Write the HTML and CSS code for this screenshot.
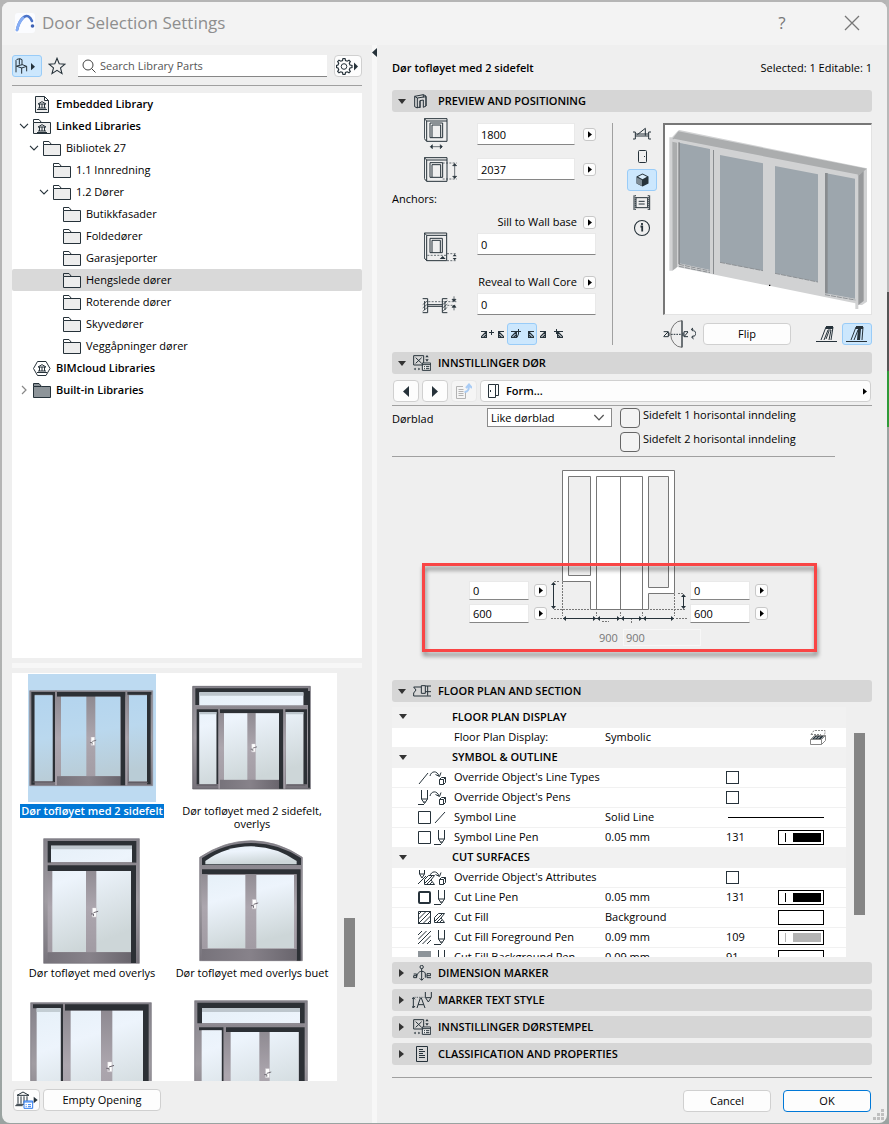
FILE: index.html
```html
<!DOCTYPE html>
<html lang="en">
<head>
<meta charset="utf-8">
<title>Door Selection Settings</title>
<link rel="stylesheet" href="styles.css">
</head>
<body>
<svg class="defs" aria-hidden="true">
  <defs>
    <linearGradient id="glass" x1="0" y1="0" x2="0.3" y2="1"><stop offset="0" stop-color="#e6f0f8"/><stop offset=".35" stop-color="#edf4fc"/><stop offset="1" stop-color="#cdd6d8"/></linearGradient>
    <linearGradient id="glassBlue" x1="0" y1="0" x2="0.2" y2="1"><stop offset="0" stop-color="#b3d4ee"/><stop offset=".5" stop-color="#bad8ee"/><stop offset="1" stop-color="#b9ccd6"/></linearGradient>
    <linearGradient id="metal" x1="0" y1="0" x2="0" y2="1"><stop offset="0" stop-color="#85828a"/><stop offset=".5" stop-color="#a09ca2"/><stop offset="1" stop-color="#77737b"/></linearGradient>
    <linearGradient id="post" x1="0" y1="0" x2="0" y2="1"><stop offset="0" stop-color="#8a868d"/><stop offset=".5" stop-color="#aca6ae"/><stop offset="1" stop-color="#a19ba3"/></linearGradient>
    <linearGradient id="rail" x1="0" y1="0" x2="1" y2="0"><stop offset="0" stop-color="#77737b"/><stop offset=".5" stop-color="#87828a"/><stop offset="1" stop-color="#69656d"/></linearGradient>
    <symbol id="folder" viewBox="0 0 18 15"><path d="M.5 3.500h17v11H.5z" fill="#ededed" stroke="#26323a"/><path d="M.5 3.500V.5H6L8.500 3.500" fill="none" stroke="#26323a"/></symbol>
    <symbol id="down" viewBox="0 0 10 6"><path d="M1 .8 5 5 9 .8" fill="none" stroke="currentColor" stroke-width="1.100"/></symbol>
    <symbol id="tri-r" viewBox="0 0 5 8"><path d="M0 0v8l5-4z"/></symbol>
    <symbol id="tri-d" viewBox="0 0 8 5"><path d="M0 0h8L4 5z"/></symbol>
    <symbol id="handle" viewBox="0 0 24 36"><path d="M5 0h13v30H5z" fill="#fff" stroke="#c9c4ca" stroke-width="2"/><path d="M9 16 25 11M1 20h8v7" stroke="#66616a" stroke-width="3" fill="none"/></symbol>
    <symbol id="pen" viewBox="0 0 12 15"><path d="M4.500 0v9l3 4.500 3-4.500V0M4.500 9h6M0 14.500h7M6.500 12h2" fill="none" stroke="#26323a"/></symbol>
    <symbol id="temple" viewBox="0 0 10 9"><path d="M1 3 5 .6 9 3zM0 8.500h10M1 7h8M2.500 3v4M5 3v4M7.500 3v4" fill="none" stroke="#26323a"/></symbol>
    <symbol id="redirect" viewBox="0 0 17 15"><path d="M1 6C2 1 8 0 10 6M6.500 4.500l4 2 1.500-4" fill="none" stroke="#26323a"/><path d="M10.500 9.500h4v5h-4zM10.500 9.500l2-2h4v5l-2 2M14.500 9.500l2-2" fill="#fff" stroke="#26323a"/></symbol>
    <symbol id="settings" viewBox="0 0 54 48"><path d="M2 2h30v28H2zM8 8l18 17M26 8 8 25" fill="none" stroke="#26323a" stroke-width="3"/><path d="M28 24h25v22H28zM28 29h25M33 35h3M33 41h3M39 35h10M39 41h10" fill="#eee" stroke="#26323a" stroke-width="3"/><path d="m2 42 6-4v8zM16 38l6 4-6 4zM37 7l5-7 5 7zM37 13l5 7 5-7z" fill="#26323a"/></symbol>
    <symbol id="hatch" viewBox="0 0 13 13"><path d="M0 4 4 0M0 8.500 8.500 0M0 13 13 0M4.500 13 13 4.500M9 13l4-4" stroke="#26323a" fill="none"/></symbol>
    <symbol id="wedge" viewBox="0 0 11 10"><path d="M.5 9.500v-5l4-4h6L7 5l3.500 4.500z" fill="#fff" stroke="#26323a"/><path d="m1 8 7-7M3 9l5-5M6 9l2-2" stroke="#26323a"/></symbol>
    <symbol id="wall" viewBox="0 0 6 7"><path d="M0 .5h5.500v6H0M0 6l5-5M2.500 6.500 5.500 3.500" fill="none" stroke="#26323a" stroke-width="1.200"/></symbol>
  </defs>
</svg>

<main class="dialog">
  <header class="titlebar">
    <svg class="logo" width="20" height="20" viewBox="0 0 20 20"><rect width="20" height="20" rx="3" fill="#fbfcff"/><path d="M2 17C5 4 13-2 17 8" fill="none" stroke="#4a73c8" stroke-width="2.600" stroke-linecap="round"/><path d="M2 17C3 12 5 8 8 5" fill="none" stroke="#85adf5" stroke-width="2.600" stroke-linecap="round"/><circle cx="17.500" cy="13" r="1.800" fill="#3f62b4"/></svg>
    <h1>Door Selection Settings</h1>
    <button class="title-btn help" aria-label="Help">?</button>
    <button class="title-btn" aria-label="Close"><svg width="16" height="16" viewBox="0 0 16 16"><path d="m1 1 14 14M15 1 1 15" stroke="#777" stroke-width="1.300"/></svg></button>
  </header>

  <div class="body">
    <section class="library">
      <div class="toolbar">
        <button class="tool active" aria-label="Library parts"><svg width="24" height="17" viewBox="54 174 72 51"><path d="M57 181l3-3 9-2 6 3v16M57 181v36M57 198l17 6 15-5-13-5-16 4M74 203v18M89 199v15M69 177l-2 3v14" fill="none" stroke="#26323a" stroke-width="3"/><path d="M102 189v22l12-11z" fill="#26323a"/></svg></button>
        <button class="bare" aria-label="Favorites"><svg width="18" height="18" viewBox="0 0 18 18"><path d="M9 1.300l2.200 5.500 5.800.4-4.500 3.700 1.500 5.700L9 13.400l-5 3.200 1.500-5.700L1 7.200l5.800-.4z" fill="none" stroke="#26323a" stroke-width="1.100"/></svg></button>
        <label class="search"><svg width="14" height="14" viewBox="0 0 14 14"><circle cx="6" cy="6" r="5" fill="none" stroke="#444"/><path d="m9.500 9.500 4 4" stroke="#444"/></svg><input type="text" placeholder="Search Library Parts" aria-label="Search Library Parts"></label>
        <button class="btn gear" aria-label="Library settings"><svg width="24" height="18" viewBox="0 0 24 18"><path d="M7 1.500h2l.5 2 1.700.7 1.800-1 1.300 1.300-1 1.800.7 1.700 2 .5v2l-2 .5-.7 1.700 1 1.800-1.300 1.300-1.800-1-1.700.7-.5 2H7l-.5-2-1.700-.7-1.800 1-1.300-1.300 1-1.800-.7-1.700-1.500-.5v-2L2 8l.7-1.700-1-1.800L3 3.200l1.800 1 1.700-.7z" fill="none" stroke="#26323a" stroke-width="1.200"/><circle cx="8" cy="9.500" r="2.800" fill="none" stroke="#26323a"/><path d="M18 5.500v8l4-4z" fill="#26323a"/></svg></button>
      </div>
      <ul class="tree">
        <li class="l0 strong"><span class="chev"></span><svg class="ico tall" viewBox="0 0 18 17"><path d="M2.500 .5h9l4 4v12h-13zM11.500 .5v4h4" fill="#eee" stroke="#26323a"/><use href="#temple" x="4" y="5" width="10" height="9"/></svg>Embedded Library</li>
        <li class="l0 strong"><svg class="chev"><use href="#down"/></svg><svg class="ico" viewBox="0 0 18 15"><use href="#folder" width="18" height="15"/><use href="#temple" x="4" y="5" width="10" height="9"/></svg>Linked Libraries</li>
        <li class="l1"><svg class="chev"><use href="#down"/></svg><svg class="ico"><use href="#folder"/></svg>Bibliotek 27</li>
        <li class="l2"><span class="chev"></span><svg class="ico"><use href="#folder"/></svg>1.1 Innredning</li>
        <li class="l2"><svg class="chev"><use href="#down"/></svg><svg class="ico"><use href="#folder"/></svg>1.2 Dører</li>
        <li class="l3"><span class="chev"></span><svg class="ico"><use href="#folder"/></svg>Butikkfasader</li>
        <li class="l3"><span class="chev"></span><svg class="ico"><use href="#folder"/></svg>Foldedører</li>
        <li class="l3"><span class="chev"></span><svg class="ico"><use href="#folder"/></svg>Garasjeporter</li>
        <li class="l3 selected"><span class="chev"></span><svg class="ico"><use href="#folder"/></svg>Hengslede dører</li>
        <li class="l3"><span class="chev"></span><svg class="ico"><use href="#folder"/></svg>Roterende dører</li>
        <li class="l3"><span class="chev"></span><svg class="ico"><use href="#folder"/></svg>Skyvedører</li>
        <li class="l3"><span class="chev"></span><svg class="ico"><use href="#folder"/></svg>Veggåpninger dører</li>
        <li class="l0 strong"><span class="chev"></span><svg class="ico" viewBox="0 0 18 15"><path d="M4.500.5h8.500l4 7-4 7H4.500l-4-7z" fill="none" stroke="#26323a"/><use href="#temple" x="4" y="3" width="10" height="9"/></svg>BIMcloud Libraries</li>
        <li class="l0 strong"><svg class="chev closed" viewBox="0 0 10 10"><path d="m3 1 4 4-4 4" fill="none" stroke="#888" stroke-width="1.200"/></svg><svg class="ico" viewBox="0 0 18 15"><path d="M.5 3.500V.5H6L8.500 3.500h9v11H.5z" fill="#8d9499" stroke="#26323a"/><path d="M.5 3.500h8" stroke="#26323a"/></svg>Built-in Libraries</li>
      </ul>
      <div class="row-split"></div>
      <div class="gallery-wrap">
        <div class="gallery">
          <figure class="picked">
            <svg viewBox="84 99 384 384"><path d="M84 99h384v384H84z" fill="#bddaf1"/><path d="M89 149h369v285H89z" fill="url(#metal)" stroke="#8a8790" stroke-width="2"/><path d="M94 153h360v8H104v270H94zM171 153h206v14H171zM157 161h8v262h-8zM361 161h15v272h-15zM441 161h11v269h-11z" fill="#2c3035"/><path d="M165 149h6v284h-6zM376 149h6v284h-6zM171 167h190v240H171z" fill="url(#post)"/><path d="M171 406h190v27H171z" fill="url(#rail)"/><path d="M104 163h54v258h-54zM183 167h76v238h-76zM286 167h75v238h-75zM387 163h54v258h-54z" fill="url(#glassBlue)"/><path d="M98 423h63M384 425h60" stroke="#5c5961" stroke-width="3"/><use href="#handle" x="269" y="288" width="20" height="30"/></svg>
            <figcaption><span>Dør tofløyet med 2 sidefelt</span></figcaption>
          </figure>
          <figure>
            <svg viewBox="564 99 384 384"><path d="M578 136h353v308H578z" fill="url(#metal)" stroke="#5c5a62" stroke-width="2"/><path d="M586 142h338v50h-14v-37H598v37h-12zM590 205h65v8h-57v217h-8zM649 213h7v216h-7zM660 205h190v238h-13V217H660zM855 205h66v225h-11V213h-55zM924 150h6v290h-6z" fill="#2c3035"/><path d="M586 197h334v7H586zM655 203h5v240h-5zM850 203h6v240h-6zM660 217h177v200H660z" fill="url(#post)"/><path d="M660 416h177v27H660z" fill="url(#rail)"/><path d="M598 154h312v39H598zM598 213h51v217h-51zM672 217h70v199h-70zM767 217h70v199h-70zM858 213h52v217h-52z" fill="url(#glass)"/><path d="M598 154h312v10H598zM598 213h51v7h-51zM858 213h52v7h-52z" fill="#bcc5cc"/><path d="M590 432h62M860 432h56" stroke="#5c5961" stroke-width="3"/><use href="#handle" x="751" y="308" width="20" height="30"/></svg>
            <figcaption><span>Dør tofløyet med 2 sidefelt, overlys</span></figcaption>
          </figure>
          <figure>
            <svg viewBox="84 45 384 384"><path d="M131 53h287v374H131z" fill="url(#metal)" stroke="#77747c" stroke-width="2"/><path d="M143 60h266v65h-13V74H153v51h-10zM143 133h250v17H143zM393 133h15v293h-15z" fill="#2c3035"/><path d="M141 125h266v7H141zM143 150h250v245H143z" fill="url(#post)"/><path d="M143 394h250v31H143z" fill="url(#rail)"/><path d="M153 74h243v49H153zM157 150h101v243H157zM289 150h104v243H289z" fill="url(#glass)"/><path d="M153 74h243v11H153z" fill="#bdc6cd"/><use href="#handle" x="272" y="260" width="23" height="34"/></svg>
            <figcaption><span>Dør tofløyet med overlys</span></figcaption>
          </figure>
          <figure>
            <svg viewBox="564 45 384 384"><path d="M599 419V109Q672 60 753 59q82 1 154 50v310z" fill="url(#metal)" stroke="#77747c" stroke-width="2"/><path d="M606 135v-24q68-45 147-45 80 0 150 45v24zM606 145h296v274h-12V160H606z" fill="#2c3035"/><path d="M616 130v-10q62-44 137-44t137 44v10z" fill="url(#glass)"/><path d="M604 132h300v12H604zM606 160h284v225H606z" fill="url(#post)"/><path d="M606 384h284v34H606z" fill="url(#rail)"/><path d="M623 162h113v220H623zM769 162h113v220H769z" fill="url(#glass)"/><use href="#handle" x="752" y="235" width="23" height="34"/></svg>
            <figcaption><span>Dør tofløyet med overlys buet</span></figcaption>
          </figure>
          <figure>
            <svg viewBox="84 531 384 384"><path d="M92 545h362v370H92z" fill="url(#metal)" stroke="#77747c" stroke-width="2"/><path d="M99 550h90v365h-7V562H99zM195 550h251v365h-17V569H195z" fill="#2c3035"/><path d="M189 547h6v368h-6zM195 569h234v346H195z" fill="url(#post)"/><path d="M110 562h72v353h-72zM212 569h91v346h-91zM337 569h92v346h-92z" fill="url(#glass)"/><path d="M110 562h72v11h-72z" fill="#c3cdd3"/><use href="#handle" x="318" y="722" width="24" height="36"/></svg>
          </figure>
          <figure>
            <svg viewBox="564 531 384 384"><path d="M584 539h338v376H584z" fill="url(#metal)" stroke="#77747c" stroke-width="2"/><path d="M592 545h322v62h-14v-46H606v46h-14zM597 619h74v296h-6V628h-68zM678 619h236v296h-18V633H678z" fill="#2c3035"/><path d="M594 611h318v7H594zM671 618h7v297h-7zM678 633h218v282H678z" fill="url(#post)"/><path d="M606 561h294v45H606zM605 628h60v287h-60zM692 633h86v282h-86zM809 633h87v282h-87z" fill="url(#glass)"/><path d="M606 561h294v12H606z" fill="#bdc6cd"/><use href="#handle" x="792" y="742" width="22" height="34"/></svg>
          </figure>
        </div>
        <div class="thumb gallery-thumb"></div>
      </div>
      <footer class="library-foot">
        <button class="btn lib-btn" aria-label="Library manager"><svg width="24" height="18" viewBox="44 808 72 54"><path d="m50 821 18-10 18 10zM53 824v22M62 824v22M71 824v22M80 824v22M48 848h24M45 852h22" fill="none" stroke="#26323a" stroke-width="3"/><path d="M71 838h26v22H71z" fill="#fff" stroke="#2f7cf0" stroke-width="3"/><path d="M71 841h26M76 849h3M83 849h9M76 855h3M83 855h9" stroke="#2f7cf0" stroke-width="3"/><path d="M100 825v20l12-10z" fill="#26323a"/></svg></button>
        <button class="btn empty-btn">Empty Opening</button>
      </footer>
    </section>

    <div class="splitter"><svg width="5" height="9" viewBox="0 0 5 9"><path d="M5 0v9L0 4.500z" fill="#26323a"/></svg></div>

    <section class="settings">
      <div class="summary"><strong>Dør tofløyet med 2 sidefelt</strong><span>Selected: 1 Editable: 1</span></div>

      <button class="bar"><svg class="tri"><use href="#tri-d"/></svg><svg class="bar-ico" viewBox="102 129 54 48"><path d="m107 139 8 5v30l-8-4zM115 144l26-4v28l-8 4v-22l-10 2v20h-8M107 139l26-5 8 4M123 152v22M133 134v8M141 138v30" fill="none" stroke="#26323a" stroke-width="3"/></svg><span>PREVIEW AND POSITIONING</span></button>

      <div class="preview">
        <div class="position">
          <div class="field">
            <svg class="dim" width="34" height="32" viewBox="132 203 102 96"><path d="M133 205h68v68h-61l-7-8zM140 212h61M140 212v61M133 205l7 7M150 218h38v44h-38zM156 224h26v38M156 224v38" fill="none" stroke="#26323a" stroke-width="3"/><path d="M152 289h34M157 283l-6 6 6 6zM181 283l6 6-6 6z" fill="#26323a" stroke="#26323a" stroke-width="2"/></svg>
            <input type="text" value="1800" aria-label="Width"><button class="more" aria-label="Width options"><svg><use href="#tri-r"/></svg></button>
          </div>
          <div class="field">
            <svg class="dim" width="34" height="32" viewBox="132 307 102 96"><path d="M133 321h68v71h-61l-7-8zM140 328h61M140 328v64M133 321l7 7M150 336h38v44h-38zM156 342h26v38M156 342v38" fill="none" stroke="#26323a" stroke-width="3"/><path d="M188 337h42M188 385h42" stroke="#26323a" stroke-width="2" stroke-dasharray="6 4"/><path d="M224 338v46M218 345l6-6 6 6zM218 377l6 6 6-6z" fill="#26323a" stroke="#26323a" stroke-width="2"/></svg>
            <input type="text" value="2037" aria-label="Height"><button class="more" aria-label="Height options"><svg><use href="#tri-r"/></svg></button>
          </div>
          <div class="anchors">Anchors:</div>
          <div class="anchor">
            <svg class="dim" width="36" height="30" viewBox="132 546 108 90"><path d="M133 549h67v83h-60l-7-8zM140 556h60M140 556v76M133 549l7 7M150 565h37v43h-37zM156 571h25v37M156 571v37" fill="none" stroke="#26323a" stroke-width="3"/><path d="M142 616h56M201 611h30M201 632h30" stroke="#26323a" stroke-width="2" stroke-dasharray="6 4"/><path d="m179 627 9-9 9 9zM224 612v18M218 619l6-7 6 7zM218 624l6 7 6-7z" fill="#26323a"/></svg>
            <div class="anchor-body"><div class="anchor-label"><label for="sill">Sill to Wall base</label><button class="more" aria-label="Sill options"><svg><use href="#tri-r"/></svg></button></div><input id="sill" type="text" value="0"></div>
          </div>
          <div class="anchor">
            <svg class="dim reveal-ico" width="36" height="24" viewBox="128 734 108 72"><path d="M130 745h15v42h-15M204 745h-15v42h15M145 763h44M145 768h44M136 752v27M197 752v27" fill="none" stroke="#26323a" stroke-width="3"/><path d="m130 763 15-12M130 773l15-12M130 783l15-12M190 763l14-12M190 773l14-12M190 783l14-12" stroke="#26323a" stroke-width="2"/><path d="M147 754h84M204 765h24" stroke="#26323a" stroke-width="2" stroke-dasharray="6 4"/><path d="M224 738v15M224 766v14M218 747l6 7 6-7zM218 771l6-7 6 7z" fill="#26323a" stroke="#26323a" stroke-width="2"/></svg>
            <div class="anchor-body"><div class="anchor-label"><label for="reveal">Reveal to Wall Core</label><button class="more" aria-label="Reveal options"><svg><use href="#tri-r"/></svg></button></div><input id="reveal" type="text" value="0"></div>
          </div>
          <div class="seg">
            <button class="bare" aria-label="Anchor outside"><svg width="24" height="12" viewBox="0 0 24 12"><use href="#wall" x="1" y="3" width="6" height="7"/><path d="M9 4.500h5M11.500 2v5" stroke="#26323a"/><g transform="matrix(-1 0 0 1 24 0)"><use href="#wall" x="0" y="3" width="6" height="7"/></g></svg></button>
            <button class="tool active" aria-label="Anchor middle"><svg width="24" height="12" viewBox="0 0 24 12"><use href="#wall" x="1" y="3" width="6" height="7"/><path d="M6 3.500h5M8.500 1v5M7 9.500 8.500 6" stroke="#26323a"/><g transform="matrix(-1 0 0 1 24 0)"><use href="#wall" x="0" y="3" width="6" height="7"/></g></svg></button>
            <button class="bare" aria-label="Anchor inside"><svg width="24" height="12" viewBox="0 0 24 12"><use href="#wall" x="0" y="3" width="6" height="7"/><path d="M14 3.500h5M16.500 1v5" stroke="#26323a"/><g transform="matrix(-1 0 0 1 23 0)"><use href="#wall" x="0" y="3" width="6" height="7"/></g></svg></button>
          </div>
        </div>

        <div class="views">
          <button class="bare" aria-label="Plan view"><svg width="18" height="14" viewBox="69 109 54 42"><path d="M69 124h7v21h-7M123 124h-7v21h7M76 130h40M76 136h40M82 132l24-19v22" fill="none" stroke="#26323a" stroke-width="3"/></svg></button>
          <button class="bare" aria-label="Elevation view"><svg width="11" height="14" viewBox="0 0 11 14"><rect x="1.500" y=".5" width="8" height="12" rx="1" fill="none" stroke="#26323a"/><path d="M7.500 6v1" stroke="#26323a"/></svg></button>
          <button class="tool active" aria-label="3D view"><svg width="13" height="14" viewBox="0 0 13 14"><path d="m6.500.5 6 3v7l-6 3-6-3v-7z" fill="#26323a"/><path d="m6.500 1.500 4.500 2.300-4.500 2.400L2 3.800z" fill="#d9edfc"/><path d="M1 4.500 6 7v6l-5-2.500z" fill="#7d8b95"/></svg></button>
          <button class="bare" aria-label="Animation"><svg width="18" height="16" viewBox="70 314 54 48"><path d="M73 315v44M120 315v44M79 322h35v30H79z" fill="none" stroke="#26323a" stroke-width="3"/><path d="M77 315v44M116 315v44" stroke="#26323a" stroke-width="4" stroke-dasharray="3 3"/><path d="M87 333h18M87 341h18" stroke="#26323a" stroke-width="3"/></svg></button>
          <button class="bare info" aria-label="Information"><svg width="18" height="18" viewBox="0 0 18 18"><circle cx="9" cy="9" r="7.500" fill="none" stroke="#26323a" stroke-width="1.100"/><path d="M9 4v2M7.500 7.500h1.700v5" fill="none" stroke="#26323a" stroke-width="1.800"/></svg></button>
        </div>

        <div class="model">
          <div class="canvas">
            <svg viewBox="162 102 618 567"><path d="M175 139l8 0 18-20 4-2 563 115v400l-15 10h-11v12h-9v-17L195 527v4l-10 8h-10z" fill="#d1d2d3"/><path d="M184 144 202 121l565 112-25 21zM184 152l14 3v374l-13 9z" fill="#abadae"/><path d="M742 254l16-14v390l-16 12z" fill="#97999b"/><path d="M204 155l93 19v363l-93-20zM327 192l129 25v322l-129-25zM492 225l129 25v323l-129-26zM642 246l90 17v360l-90-16z" fill="#9da6ad"/><path d="M202 153h5v366h-5zM306 177h3v372h-3zM642 246h8v361h-8z" fill="#898c8f"/><path d="M204 520l93 20M204 526l93 19M327 514l129 25M492 547l129 26M642 611l91 16" stroke="#8d9195" stroke-width="3" stroke-dasharray="15 3"/><path d="m188 147 552 107" stroke="#d1d2d3" stroke-width="7"/><path d="M474 581h4v4h-4z"/></svg>
          </div>
          <div class="model-tools">
            <svg width="33" height="28" viewBox="158 688 99 84"><path d="M215 690a34 40 0 0 0 0 80z" fill="#eee" stroke="#777" stroke-width="3"/><path d="M215 690v80" stroke="#26323a" stroke-width="3"/><path d="M182 731h31" stroke="#26323a" stroke-width="3" stroke-dasharray="5 3"/><path d="M160 723h14v15h-14M176 726v10M233 723h-12v15h12M218 726v10M160 737l13-13M222 737l11-13M244 716c16 5 16 20 1 24M248 712l-5 4 5 6M249 734l-5 6 6 5" fill="none" stroke="#26323a" stroke-width="3"/></svg>
            <button class="btn flip">Flip</button>
            <button class="bare open" aria-label="Opening straight"><svg width="22" height="18" viewBox="0 0 22 18"><path d="M0 16.500h21M5 15l5-13h7l-2 13M8 15l4-10 3 0-2 10M10 14l3-8" fill="none" stroke="#26323a"/><path d="M10 1h7v3h-7z" fill="#26323a"/></svg></button>
            <button class="tool active" aria-label="Opening slanted"><svg width="22" height="18" viewBox="0 0 22 18"><path d="M0 16.500h21M5 15l5-13h7l-1 13M8 15l4-10" fill="none" stroke="#26323a"/><path d="M10 1h7v3h-7zM12 4h3l-1 11h-3z" fill="#26323a"/></svg></button>
          </div>
        </div>
      </div>

      <button class="bar"><svg class="tri"><use href="#tri-d"/></svg><svg class="bar-ico"><use href="#settings"/></svg><span>INNSTILLINGER DØR</span></button>
      <div class="pager">
        <button class="btn step" aria-label="Previous page"><svg width="6" height="11" viewBox="0 0 6 11"><path d="M6 0v11L0 5.500z" fill="#26323a"/></svg></button>
        <button class="btn step" aria-label="Next page"><svg width="6" height="11" viewBox="0 0 6 11"><path d="M0 0v11l6-5.500z" fill="#26323a"/></svg></button>
        <button class="btn step faded" aria-label="Parent page" disabled><svg width="16" height="16" viewBox="0 0 16 16"><path d="M7 3.500H.5v12h9V9M2.500 6.500h5M2.500 8.500h5M2.500 10.500h5M2.500 12.500h5" fill="none" stroke="#b3b3b3"/><path d="M8.500 9C12 9 13 7 13 2M10 5l3-3.500L16 5" fill="none" stroke="#a9ccf5" stroke-width="2"/></svg></button>
        <button class="btn page"><svg width="11" height="14" viewBox="0 0 11 14"><path d="M.5.5h7v13h-7zM7.500.5h3v11h-3" fill="none" stroke="#26323a"/><path d="M2.500 8V6" stroke="#26323a"/></svg><span>Form...</span><svg class="end" width="4" height="7" viewBox="0 0 5 8"><use href="#tri-r"/></svg></button>
      </div>
      <div class="form">
        <label class="leaf-label" for="leaf">Dørblad</label>
        <div class="select"><select id="leaf"><option>Like dørblad</option></select><svg width="12" height="7"><use href="#down"/></svg></div>
        <div class="checks">
          <label><input type="checkbox">Sidefelt 1 horisontal inndeling</label>
          <label><input type="checkbox">Sidefelt 2 horisontal inndeling</label>
        </div>
      </div>
      <div class="opening">
        <div class="opening-row">
          <div class="sides">
            <div><input type="text" value="0" aria-label="Left sill"><button class="more" aria-label="Left sill options"><svg><use href="#tri-r"/></svg></button></div>
            <div><input type="text" value="600" aria-label="Left width"><button class="more" aria-label="Left width options"><svg><use href="#tri-r"/></svg></button></div>
          </div>
          <svg class="drawing" width="142" height="156" viewBox="548 468 142 156"><path fill-rule="evenodd" d="M562.500 470.500h112v123h-26v16h-58v-28h-28zM568.500 476.500v99h22v-99zM648.500 476.500v111h20v-111z" fill="#fff" stroke="#777"/><path d="M596.500 609.500v-133h46v133M620.500 476.500v133" fill="none" stroke="#777"/><path d="M562.500 582v34M674.500 594v22M554 609.500h36M650 609.500h36M554 581.500h6M678 593.500h6M596.500 612v4M620.500 612v4M642.500 612v4M551 618.500h11M676 618.500h11M602 621.500h7M631.500 618v6" stroke="#777" stroke-dasharray="2 1"/><path d="M553.500 583v25M683.500 595v13M563 618.500h111" stroke="#26323a"/><path d="m551 585 2.500-3 2.500 3zM551 606l2.500 3 2.500-3zM681 597l2.500-3 2.500 3zM681 606l2.500 3 2.500-3zM566 616v5l-3-2.500zM593 616v5l3-2.500zM600 616v5l-3-2.500zM617 616v5l3-2.500zM624 616v5l-3-2.500zM639 616v5l3-2.500zM646 616v5l-3-2.500zM671 616v5l3-2.500z" fill="#26323a"/></svg>
          <div class="sides">
            <div><input type="text" value="0" aria-label="Right sill"><button class="more" aria-label="Right sill options"><svg><use href="#tri-r"/></svg></button></div>
            <div><input type="text" value="600" aria-label="Right width"><button class="more" aria-label="Right width options"><svg><use href="#tri-r"/></svg></button></div>
          </div>
        </div>
        <div class="totals"><label for="leafw">900</label><input id="leafw" type="text" value="900" disabled></div>
        <div class="marker"></div>
      </div>

      <button class="bar"><svg class="tri"><use href="#tri-d"/></svg><svg class="bar-ico" viewBox="99 39 54 48"><path d="M124 51h-23l7 9-7 9v9h52M124 47h12v23h-12zM136 48h17M136 65h17M143 48v29" fill="none" stroke="#26323a" stroke-width="3"/></svg><span>FLOOR PLAN AND SECTION</span></button>
      <div class="table-wrap">
        <div class="table-scroll">
          <table>
            <colgroup><col class="c-icon"><col class="c-name"><col class="c-val"><col class="c-num"><col class="c-sw"></colgroup>
            <tbody>
              <tr class="group"><td><svg class="tri"><use href="#tri-d"/></svg></td><th colspan="4">FLOOR PLAN DISPLAY</th></tr>
              <tr><td></td><td>Floor Plan Display:</td><td>Symbolic</td><td></td><td><svg class="plan-ico" width="16" height="15" viewBox="0 0 16 15"><path d="M.5 9.500h11v5H.5zM.5 9.500l4-4h11v5l-4 4M11.500 9.500l4-4" fill="none" stroke="#888"/><path d="m2 9 3-3h9l-3 3z" fill="#26323a"/><path d="M1 4.500l3-4h11v3l-3 3M1 4.500h10" fill="none" stroke="#888" stroke-dasharray="2 1"/><path d="m5 8.500 2-2M8 8.500l2-2" stroke="#fff"/></svg></td></tr>
              <tr class="group"><td><svg class="tri"><use href="#tri-d"/></svg></td><th colspan="4">SYMBOL &amp; OUTLINE</th></tr>
              <tr><td><svg class="pair" width="28" height="15"><path d="m1 14 9-11" stroke="#26323a"/><use href="#redirect" x="11" width="17" height="15"/></svg></td><td>Override Object's Line Types</td><td></td><td><input type="checkbox" aria-label="Override Object's Line Types"></td><td></td></tr>
              <tr><td><svg class="pair" width="28" height="15"><use href="#pen" x="-1" width="12" height="15"/><use href="#redirect" x="11" width="17" height="15"/></svg></td><td>Override Object's Pens</td><td></td><td><input type="checkbox" aria-label="Override Object's Pens"></td><td></td></tr>
              <tr><td><svg class="pair" width="28" height="15"><path d="M.5 1.500h12v12H.5z" fill="#fff" stroke="#26323a"/><path d="M17 13 27 2" stroke="#26323a"/></svg></td><td>Symbol Line</td><td>Solid Line</td><td colspan="2"><div class="line"></div></td></tr>
              <tr><td><svg class="pair" width="28" height="15"><path d="M.5 1.500h12v12H.5z" fill="#fff" stroke="#26323a"/><use href="#pen" x="16" width="12" height="15"/></svg></td><td>Symbol Line Pen</td><td>0.05 mm</td><td>131</td><td><div class="swatch"><i></i><b></b></div></td></tr>
              <tr class="group"><td><svg class="tri"><use href="#tri-d"/></svg></td><th colspan="4">CUT SURFACES</th></tr>
              <tr><td><svg class="pair" width="28" height="15"><path d="M1.500 0v4L4 8l2.500-4V0M2 4h4M0 14l8-8" fill="none" stroke="#26323a"/><use href="#wedge" x="6" y="5" width="11" height="10"/><use href="#redirect" x="11" width="17" height="15"/></svg></td><td>Override Object's Attributes</td><td></td><td><input type="checkbox" aria-label="Override Object's Attributes"></td><td></td></tr>
              <tr><td><svg class="pair" width="28" height="15"><rect x="1" y="2" width="11" height="11" rx="1" fill="#fff" stroke="#26323a" stroke-width="2"/><use href="#pen" x="16" width="12" height="15"/></svg></td><td>Cut Line Pen</td><td>0.05 mm</td><td>131</td><td><div class="swatch"><i></i><b></b></div></td></tr>
              <tr><td><svg class="pair" width="28" height="15"><path d="M.5 1.500h12v12H.5z" fill="#fff" stroke="#26323a"/><use href="#hatch" y="1" width="13" height="13"/><use href="#wedge" x="16" y="3" width="11" height="10"/></svg></td><td>Cut Fill</td><td>Background</td><td></td><td><div class="swatch"></div></td></tr>
              <tr><td><svg class="pair" width="28" height="15"><use href="#hatch" y="1" width="13" height="13"/><use href="#pen" x="16" width="12" height="15"/></svg></td><td>Cut Fill Foreground Pen</td><td>0.09 mm</td><td>109</td><td><div class="swatch pale"><i></i><b></b></div></td></tr>
              <tr><td><svg class="pair" width="28" height="15"><path d="M0 1h13v13H0z" fill="#8d9499"/><use href="#pen" x="16" width="12" height="15"/></svg></td><td>Cut Fill Background Pen</td><td>0.09 mm</td><td>91</td><td><div class="swatch"></div></td></tr>
            </tbody>
          </table>
        </div>
        <div class="thumb table-thumb"></div>
      </div>

      <div class="stack">
        <button class="bar"><svg class="tri side"><use href="#tri-r"/></svg><svg class="bar-ico" viewBox="98 29 54 48"><circle cx="124" cy="35" r="5" fill="none" stroke="#26323a" stroke-width="3"/><path d="M124 40v34M118 69l6 6 6-6M100 56h9v11h-9v-6h9M108 66c3-12 8-18 16-18 7 0 11 3 11 8v11M140 61h11v-6h-11v12h12" fill="none" stroke="#26323a" stroke-width="3"/></svg><span>DIMENSION MARKER</span></button>
        <button class="bar"><svg class="tri side"><use href="#tri-r"/></svg><svg class="bar-ico wide" viewBox="97 110 60 51"><path d="M101 128v28M96 132l5-6 5 6M96 152l5 6 5-6M112 158l10-30 3 0 11 30M115 148h17M137 110v16l9 14 9-14v-16M138 127h16" fill="none" stroke="#26323a" stroke-width="3"/><path d="M104 126h30" stroke="#26323a" stroke-width="2" stroke-dasharray="4 3"/></svg><span>MARKER TEXT STYLE</span></button>
        <button class="bar"><svg class="tri side"><use href="#tri-r"/></svg><svg class="bar-ico"><use href="#settings"/></svg><span>INNSTILLINGER DØRSTEMPEL</span></button>
        <button class="bar"><svg class="tri side"><use href="#tri-r"/></svg><svg class="bar-ico" viewBox="0 0 18 16"><path d="M3.500.5h11v15h-11zM6 3.500h4M6 5.500h6M6 7.500h4M6 9.500h6M6 11.500h6" fill="none" stroke="#26323a"/></svg><span>CLASSIFICATION AND PROPERTIES</span></button>
      </div>

      <footer class="actions"><button class="btn">Cancel</button><button class="btn primary">OK</button></footer>
    </section>
  </div>
  <svg class="grip" width="12" height="12" viewBox="0 0 12 12"><path d="M8 0h3v3H8zM8 4h3v3H8zM4 4h3v3H4zM0 8h3v3H0zM4 8h3v3H4zM8 8h3v3H8z" fill="#bfbfbf"/></svg>
</main>
</body>
</html>
```

FILE: styles.css
```css
* { box-sizing: border-box; }
html {
  background:
    linear-gradient(#b8b8b8 0 26%, #555 26% 33%, #2f9a3a 33% 38%, #9aa3a1 38%) right / 3px 100% no-repeat,
    linear-gradient(#b5b5b5, #b5b5b5 50%, #9aa3a1);
}
body {
  margin: 0;
  padding: 2px;
  font: 11px/16px "Open Sans", "Noto Sans", sans-serif;
  color: #000;
}
button, input, select { font: inherit; color: inherit; }
button { padding: 0; }
svg { display: block; flex: none; }
.defs { position: absolute; width: 0; height: 0; }

.dialog {
  position: relative;
  display: flex;
  flex-direction: column;
  min-height: calc(100vh - 4px);
  background: #efefef;
  border-radius: 8px;
  overflow: hidden;
}
.titlebar {
  display: flex;
  align-items: center;
  height: 43px;
  padding: 0 25px 2px 13px;
  background: #f3f3f3;
}
.titlebar h1 {
  flex: 1;
  margin: 0 0 0 7px;
  font-size: 17px;
  font-weight: 400;
  line-height: 24px;
  color: #8e8e8e;
}
.title-btn { width: 20px; height: 24px; border: 0; background: none; display: grid; place-items: center; }
.title-btn.help { margin-right: 50px; font-size: 17px; color: #777; }

.body { flex: 1; display: flex; }
.library { width: 370px; padding: 10px 10px 12px; display: flex; flex-direction: column; }
.splitter { width: 5px; background: #f7f7f7; padding-top: 3px; }
.settings { flex: 1; min-width: 0; padding: 15px 15px 11px; display: flex; flex-direction: column; }

.btn {
  display: flex;
  align-items: center;
  justify-content: center;
  height: 22px;
  border: 1px solid #d0d0d0;
  border-radius: 4px;
  background: #fdfdfd;
}
.tool {
  display: grid;
  place-items: center;
  width: 30px;
  height: 22px;
  border: 1px solid #99ccf8;
  border-radius: 3px;
  background: #cce7fd;
}
.bare { display: grid; place-items: center; width: 30px; height: 22px; border: 0; background: none; }
.more {
  display: grid;
  place-items: center;
  flex: none;
  width: 13px;
  height: 13px;
  border: 1px solid #c8c8c8;
  border-radius: 3px;
  background: #fdfdfd;
}
.more svg { width: 4px; height: 7px; }
input[type="text"] {
  min-width: 0;
  height: 22px;
  padding: 0 3px;
  border: 1px solid #e9e9e9;
  border-bottom-color: #868686;
  background: #fff;
  outline: 0;
}
input[type="checkbox"] { appearance: none; margin: 0; flex: none; display: block; background: #fff; border: 1px solid #26323a; }

.toolbar { display: flex; align-items: center; padding-bottom: 8px; border-bottom: 1px solid #a0a0a0; width: 350px; }
.search {
  flex: 1;
  display: flex;
  align-items: center;
  gap: 4px;
  height: 22px;
  margin: 0 7px 0 6px;
  padding-left: 4px;
  background: #fff;
  border-bottom: 1px solid #868686;
}
.search input[type="text"] { flex: 1; height: 20px; padding: 0; border: 0; }
.search input::placeholder { color: #555; opacity: 1; }
.gear { width: 28px; }

.tree { flex: 1; margin: 7px 0 0; padding: 0; list-style: none; background: #fff; }
.tree li { display: flex; align-items: center; height: 22px; }
.strong { font-weight: 600; }
.chev { flex: none; width: 10px; height: 6px; margin-right: 4px; color: #26323a; }
.chev.closed { height: 10px; }
.ico { width: 18px; height: 15px; margin-right: 5px; }
.ico.tall { height: 17px; }
.l0 { padding-left: 7px; }
.l1 { padding-left: 17px; }
.l2 { padding-left: 27px; }
.l3 { padding-left: 37px; }
.tree .selected { background: #d9d9d9; border-radius: 2px; }

.row-split { height: 5px; margin: 5px 0; background: #f7f7f7; }
.gallery-wrap { display: flex; gap: 7px; }
.gallery {
  width: 325px;
  height: 408px;
  padding-top: 1px;
  overflow: hidden;
  display: grid;
  grid-template-columns: 160px 160px;
  grid-auto-rows: 162px;
  background: #fff;
}
.gallery figure { margin: 0; display: flex; flex-direction: column; align-items: center; }
.gallery figure svg { width: 128px; height: 128px; }
figcaption { margin-top: 2px; padding: 0 2px; text-align: center; line-height: 13px; }
.picked figcaption { padding: 0; white-space: nowrap; }
.picked span { display: block; padding: 0 1px; height: 14px; background: #0078d7; color: #fff; font-weight: 600; }
.thumb { width: 11px; background: #858585; }
.gallery-thumb { height: 69px; margin-top: 245px; }
.library-foot { display: flex; gap: 3px; margin-top: 8px; padding-left: 1px; }
.lib-btn { width: 27px; }
.empty-btn { width: 118px; }

.summary { display: flex; justify-content: space-between; margin-bottom: 14px; }
strong { font-weight: 600; }
.bar {
  display: flex;
  align-items: center;
  gap: 7px;
  width: 100%;
  height: 22px;
  padding-left: 6px;
  border: 0;
  border-radius: 3px;
  background: #d6d6d6;
  font-weight: 600;
  flex: none;
}
.tri { width: 8px; height: 5px; fill: #333; }
.tri.side { width: 5px; height: 8px; margin: 0 2px 0 1px; }
.bar-ico { width: 18px; height: 16px; }
.bar-ico.wide { width: 20px; height: 17px; margin: 0 -1px; }

.preview { display: flex; padding: 11px 0 7px; }
.position { width: 221px; padding-right: 16px; display: flex; flex-direction: column; border-right: 1px solid #a0a0a0; }
.dim { margin-left: 32px; }
.field {
  display: grid;
  grid-template: 22px / 77px 98px 13px;
  column-gap: 8px;
  align-items: center;
  margin-bottom: 13px;
}
.anchors { margin: -3px 0 3px; line-height: 18px; }
.anchor { display: flex; align-items: flex-end; margin-bottom: 16px; }
.anchor .dim { margin-right: 17px; margin-bottom: -7px; }
.anchor .reveal-ico { margin-left: 30px; margin-right: 19px; margin-bottom: -4px; }
.anchor-body { flex: 1; }
.anchor-body input { display: block; width: 119px; }
.anchor-label { display: flex; align-items: center; justify-content: flex-end; gap: 6px; height: 22px; }
.seg { display: flex; margin-top: -8px; padding-left: 85px; }

.views { width: 50px; padding-left: 14px; display: flex; flex-direction: column; gap: 1px; }
.views .info { margin-top: 2px; }
.model { flex: 1; display: flex; flex-direction: column; }
.canvas {
  background: #fff;
  border: 1px solid #e3e3e3;
  border-top: 2px solid #777;
  border-left: 2px solid #777;
}
.canvas svg { width: 100%; height: auto; }
.model-tools { display: flex; align-items: center; height: 22px; margin-top: 8px; }
.flip { width: 88px; margin-left: 7px; }
.model-tools .open { margin-left: auto; }

.pager { display: flex; gap: 3px; padding: 6px 1px 3px; border-bottom: 1px solid #a0a0a0; }
.step { width: 26px; }
.faded { border-color: #e8e8e8; background: #f5f5f5; }
.page { flex: 1; justify-content: flex-start; gap: 7px; padding: 0 3px 0 7px; font-weight: 600; }
.page .end { margin-left: auto; }

.form { display: flex; align-items: flex-start; width: 443px; padding: 2px 0 4px; border-bottom: 1px solid #a0a0a0; }
.leaf-label { width: 95px; padding-top: 3px; }
.select { position: relative; width: 125px; }
.select select { appearance: none; display: block; width: 100%; height: 19px; padding: 0 3px; border: 1px solid #8a8a8a; border-radius: 0; background: #fff; }
.select svg { position: absolute; right: 7px; top: 6px; color: #555; pointer-events: none; }
.checks { margin-left: 8px; display: flex; flex-direction: column; gap: 4px; }
.checks label { display: flex; gap: 3px; height: 20px; line-height: 14px; }
.checks input { width: 20px; height: 20px; border: 1px solid #666; border-radius: 4px; background: #f3f3f3; }

.opening { position: relative; height: 223px; padding-top: 11px; }
.opening-row { display: flex; align-items: flex-end; padding-left: 77px; }
.sides { display: flex; flex-direction: column; gap: 4px; width: 79px; padding-bottom: 1px; }
.sides div { display: flex; align-items: center; gap: 5px; }
.sides input[type="text"] { width: 60px; height: 19px; }
.totals { display: flex; align-items: center; gap: 5px; margin-top: 5px; padding-left: 207px; color: #777; }
.totals input[type="text"] { width: 78px; height: 17px; padding: 0 2px; background: #efefef; border-color: #f7f7f7; }
.marker {
  position: absolute;
  left: 30px;
  top: 106px;
  width: 395px;
  height: 89px;
  border: 3px solid #f94545;
  filter: drop-shadow(1px 4px 2px rgba(0, 0, 0, .45));
  pointer-events: none;
}

.table-wrap { display: flex; gap: 8px; margin-top: 5px; padding-right: 7px; }
.table-scroll { flex: 1; height: 250px; overflow: hidden; background: #fff; }
table { width: 100%; border-collapse: collapse; table-layout: fixed; }
.c-icon { width: 62px; }
.c-name { width: 151px; }
.c-val { width: 121px; }
.c-num { width: 52px; }
td, th { height: 20px; padding: 0; border-bottom: 1px solid #f1f1f1; text-align: left; font-weight: 400; white-space: nowrap; line-height: 16px; }
.group td, .group th { background: #f1f1f1; }
.group th { font-weight: 600; text-indent: -2px; }
.group .tri { margin-left: 7px; }
.pair { margin-left: 26px; }
.plan-ico { margin-left: 32px; }
td input[type="checkbox"] { width: 13px; height: 13px; }
.line { height: 1px; width: 96px; margin-left: 2px; background: #000; }
.swatch { display: flex; gap: 7px; width: 46px; height: 15px; padding: 2px 2px 2px 6px; border: 1px solid #000; background: #fff; }
.swatch i { width: 1px; background: #000; }
.swatch b { flex: 1; background: #000; }
.swatch.pale i, .swatch.pale b { background: #b3b3b3; }
.table-thumb { height: 182px; margin-top: 26px; }

.stack { display: flex; flex-direction: column; gap: 5px; margin-top: 5px; padding-bottom: 12px; }
.actions { display: flex; justify-content: flex-end; gap: 12px; padding: 12px 1px 0 0; border-top: 1px solid #a0a0a0; }
.actions .btn { width: 88px; }
.actions .primary { border-color: #0078d7; }
.grip { position: absolute; right: 2px; bottom: 2px; }
```
